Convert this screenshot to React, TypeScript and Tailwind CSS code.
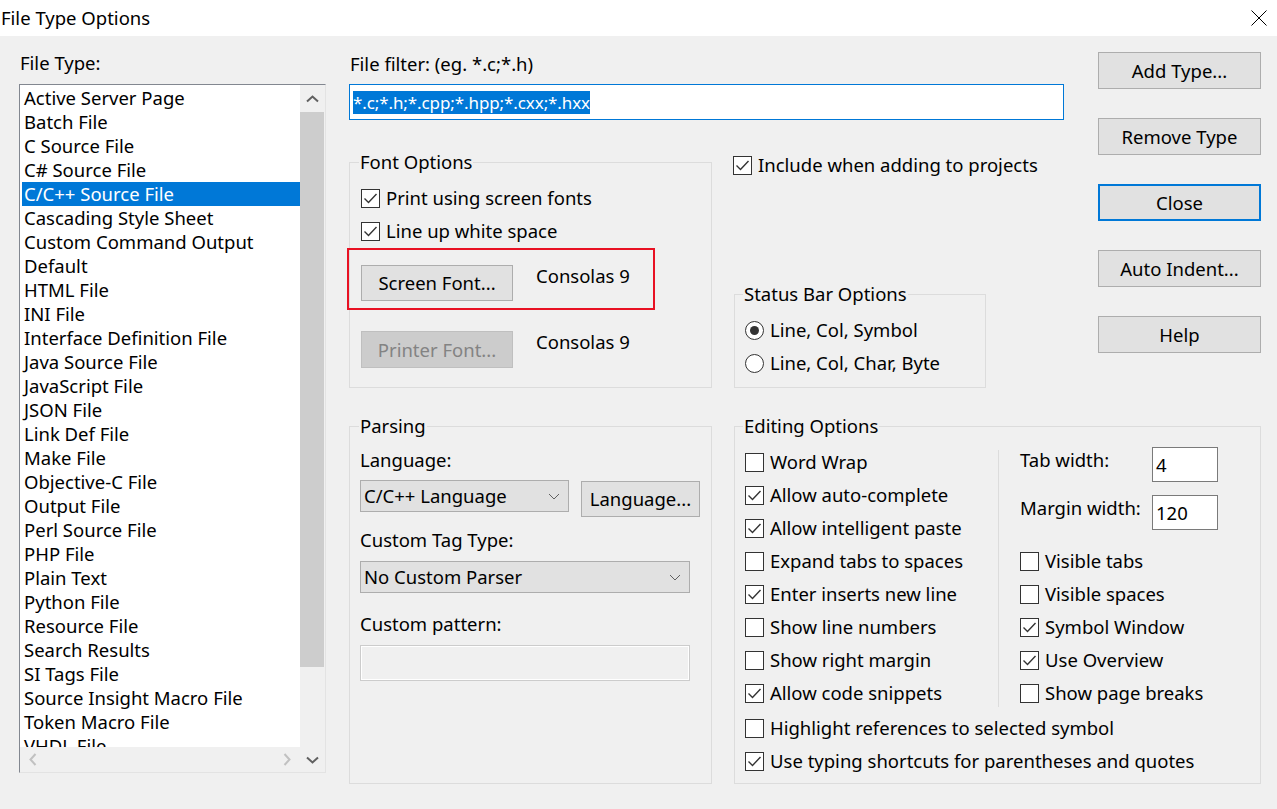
import React, { FC, ReactNode } from 'react'

const fileTypes = [
  'Active Server Page', 'Batch File', 'C Source File', 'C# Source File', 'C/C++ Source File',
  'Cascading Style Sheet', 'Custom Command Output', 'Default', 'HTML File', 'INI File',
  'Interface Definition File', 'Java Source File', 'JavaScript File', 'JSON File', 'Link Def File',
  'Make File', 'Objective-C File', 'Output File', 'Perl Source File', 'PHP File', 'Plain Text',
  'Python File', 'Resource File', 'Search Results', 'SI Tags File', 'Source Insight Macro File',
  'Token Macro File', 'VHDL File',
]

const CheckBox: FC<{ checked?: boolean; label: string }> = ({ checked, label }) => (
  <div className="flex items-center h-[24px] whitespace-nowrap">
    <span className="w-[19px] h-[19px] border border-[#333333] bg-white shrink-0 flex items-center justify-center">
      {checked && (
        <svg width="17" height="17" viewBox="0 0 17 17">
          <path d="M2.5 8.5 L6.5 12.5 L14.5 4" fill="none" stroke="#333333" strokeWidth="1.4" />
        </svg>
      )}
    </span>
    <span className="ml-[6px]">{label}</span>
  </div>
)

const Radio: FC<{ checked?: boolean; label: string }> = ({ checked, label }) => (
  <div className="flex items-center h-[24px] whitespace-nowrap">
    <span className="w-[19px] h-[19px] rounded-full border border-[#333333] bg-white shrink-0 flex items-center justify-center">
      {checked && <span className="w-[9px] h-[9px] rounded-full bg-[#333333]" />}
    </span>
    <span className="ml-[6px]">{label}</span>
  </div>
)

const Btn: FC<{ children: ReactNode; className?: string; disabled?: boolean; focused?: boolean }> = ({ children, className = '', disabled, focused }) => {
  let look = 'bg-[#e1e1e1] border border-[#adadad] text-black'
  if (disabled) look = 'bg-[#cccccc] border border-[#bfbfbf] text-[#838383]'
  if (focused) look = 'bg-[#e1e1e1] border-2 border-[#0078d7] text-black'
  return (
    <div className={`${look} flex items-center justify-center whitespace-nowrap shrink-0 leading-[24px] ${className}`}>{children}</div>
  )
}

const Chevron = () => (
  <svg width="12" height="7" viewBox="0 0 12 7">
    <path d="M1 1 L6 6 L11 1" fill="none" stroke="#606060" strokeWidth="1" />
  </svg>
)

const Combo: FC<{ value: string; className?: string }> = ({ value, className = '' }) => (
  <div className={`h-[32px] bg-[#e1e1e1] border border-[#adadad] flex items-center justify-between pl-[3px] pr-[8px] ${className}`}>
    <span className="whitespace-nowrap leading-[24px]">{value}</span>
    <Chevron />
  </div>
)

const Group: FC<{ title: string; className?: string; legendClass?: string; children: ReactNode }> = ({ title, className = '', legendClass = 'ml-[9px]', children }) => (
  <fieldset className={`border border-[#dcdcdc] m-0 p-0 ${className}`}>
    <legend className={`${legendClass} px-[1px] leading-[24px]`}>{title}</legend>
    {children}
  </fieldset>
)

const FileList = () => (
  <div className="mt-[9px] h-[689px] border-t border-l border-[#828790] border-r border-b border-r-[#e3e3e3] border-b-[#e3e3e3] bg-white flex">
    <div className="flex-1 flex flex-col min-w-0">
      <div className="flex-1 overflow-hidden pl-[2px] pt-[1px]">
        {fileTypes.map(t => (
          <div
            key={t}
            className={`h-[24px] leading-[24px] pl-[2px] whitespace-nowrap ${t === 'C/C++ Source File' ? 'bg-[#0078d7] text-white' : ''}`}
          >
            {t}
          </div>
        ))}
      </div>
      <div className="h-[25px] bg-[#f0f0f0] flex items-center justify-between px-[9px]">
        <svg width="8" height="13" viewBox="0 0 8 13">
          <path d="M6.5 1 L1.5 6.5 L6.5 12" fill="none" stroke="#c1c1c1" strokeWidth="2" />
        </svg>
        <svg width="8" height="13" viewBox="0 0 8 13">
          <path d="M1.5 1 L6.5 6.5 L1.5 12" fill="none" stroke="#c1c1c1" strokeWidth="2" />
        </svg>
      </div>
    </div>
    <div className="w-[25px] bg-[#f0f0f0] flex flex-col">
      <div className="h-[27px] flex items-center justify-center">
        <svg width="13" height="8" viewBox="0 0 13 8">
          <path d="M1 6.5 L6.5 1.5 L12 6.5" fill="none" stroke="#606060" strokeWidth="2" />
        </svg>
      </div>
      <div className="h-[555px] bg-[#cdcdcd] mr-[1px]" />
      <div className="flex-1" />
      <div className="h-[25px] flex items-center justify-center">
        <svg width="13" height="8" viewBox="0 0 13 8">
          <path d="M1 1.5 L6.5 6.5 L12 1.5" fill="none" stroke="#606060" strokeWidth="2" />
        </svg>
      </div>
    </div>
  </div>
)

export default function App() {
  return (
    <div className="w-[1277px] h-[809px] bg-[#f0f0f0] text-black text-[18.5px] overflow-hidden font-['Segoe_UI','Noto_Sans',sans-serif]">
      {/* title bar */}
      <div className="h-[36px] bg-white flex items-center justify-between">
        <span className="pl-[1px] leading-[24px]">File Type Options</span>
        <svg className="mr-[10px]" width="16" height="16" viewBox="0 0 16 16">
          <path d="M0.5 0.5 L15.5 15.5 M15.5 0.5 L0.5 15.5" stroke="#000" strokeWidth="1" />
        </svg>
      </div>

      <div className="flex pt-[15px] pl-[19px]">
        {/* file type list */}
        <div className="w-[307px] flex flex-col">
          <div className="leading-[24px] pl-[1px]">File Type:</div>
          <FileList />
        </div>

        <div className="ml-[23px] w-[912px] flex flex-col pt-[1px]">
          {/* upper area */}
          <div className="flex">
            <div className="w-[715px] flex flex-col">
              <div className="leading-[24px] pl-[1px]">File filter: (eg. *.c;*.h)</div>
              <div className="mt-[8px] h-[36px] border border-[#0078d7] bg-white pl-[3px] flex items-center">
                <span className="bg-[#0078d7] text-white text-[17px] tracking-[-0.1px] leading-[23px] whitespace-nowrap">*.c;*.h;*.cpp;*.hpp;*.cxx;*.hxx</span>
              </div>

              <div className="mt-[30px] flex gap-[22px]">
                <Group title="Font Options" className="w-[363px]">
                  <div className="pl-[11px] pt-[12px] pb-[19px] flex flex-col">
                    <CheckBox checked label="Print using screen fonts" />
                    <div className="mt-[9px]"><CheckBox checked label="Line up white space" /></div>
                    <div className="mt-[5px] -ml-[14px] w-[308px] h-[62px] border-2 border-[#e81123] flex items-start pl-[12px] pt-[15px]">
                      <Btn className="w-[152px] h-[36px]">Screen Font...</Btn>
                      <span className="ml-[23px] -mt-[1px] leading-[24px]">Consolas 9</span>
                    </div>
                    <div className="mt-[21px] flex items-start">
                      <Btn disabled className="w-[152px] h-[37px]">Printer Font...</Btn>
                      <span className="ml-[23px] -mt-[1px] leading-[24px]">Consolas 9</span>
                    </div>
                  </div>
                </Group>

                <div className="w-[252px] flex flex-col justify-between">
                  <div className="mt-[3px] -ml-[1px]">
                    <CheckBox checked label="Include when adding to projects" />
                  </div>
                  <Group title="Status Bar Options" legendClass="ml-[8px]" className="w-[252px]">
                    <div className="pl-[10px] pt-[12px] pb-[12px] flex flex-col gap-[9px]">
                      <Radio checked label="Line, Col, Symbol" />
                      <Radio label="Line, Col, Char, Byte" />
                    </div>
                  </Group>
                </div>
              </div>
            </div>

            {/* button column */}
            <div className="ml-[34px] w-[163px] flex flex-col gap-[29px]">
              <Btn className="h-[37px]">Add Type...</Btn>
              <Btn className="h-[37px]">Remove Type</Btn>
              <Btn focused className="h-[37px]">Close</Btn>
              <Btn className="h-[37px]">Auto Indent...</Btn>
              <Btn className="h-[37px]">Help</Btn>
            </div>
          </div>

          {/* lower area */}
          <div className="mt-[26px] flex gap-[22px]">
            <Group title="Parsing" className="w-[363px] h-[370px]">
              <div className="pl-[10px] pt-[10px] flex flex-col">
                <div className="leading-[24px]">Language:</div>
                <div className="mt-[8px] flex items-start">
                  <Combo value="C/C++ Language" className="w-[209px]" />
                  <Btn className="ml-[12px] mt-[1px] w-[119px] h-[36px]">Language...</Btn>
                </div>
                <div className="mt-[11px] leading-[24px]">Custom Tag Type:</div>
                <Combo value="No Custom Parser" className="mt-[9px] w-[330px]" />
                <div className="mt-[19px] leading-[24px]">Custom pattern:</div>
                <div className="mt-[9px] w-[330px] h-[36px] border border-[#cccccc] bg-[#f0f0f0] shadow-[inset_0_0_0_1px_#ffffff]" />
              </div>
            </Group>

            <Group title="Editing Options" legendClass="ml-[8px]" className="w-[527px] h-[370px]">
              <div className="pl-[10px] pt-[12px] flex flex-col">
                <div className="flex">
                  <div className="w-[253px] flex flex-col gap-[9px]">
                    <CheckBox label="Word Wrap" />
                    <CheckBox checked label="Allow auto-complete" />
                    <CheckBox checked label="Allow intelligent paste" />
                    <CheckBox label="Expand tabs to spaces" />
                    <CheckBox checked label="Enter inserts new line" />
                    <CheckBox label="Show line numbers" />
                    <CheckBox label="Show right margin" />
                    <CheckBox checked label="Allow code snippets" />
                  </div>
                  <div className="w-px h-[257px] bg-[#dcdcdc]" />
                  <div className="ml-[21px] -mt-[3px] flex flex-col">
                    <div className="flex items-start">
                      <span className="w-[132px] mt-[1px] leading-[24px]">Tab width:</span>
                      <div className="w-[66px] h-[35px] border border-[#7a7a7a] bg-white pl-[3px] flex items-center">4</div>
                    </div>
                    <div className="mt-[13px] flex items-start">
                      <span className="w-[132px] mt-[1px] leading-[24px]">Margin width:</span>
                      <div className="w-[66px] h-[35px] border border-[#7a7a7a] bg-white pl-[3px] flex items-center">120</div>
                    </div>
                    <div className="mt-[19px] flex flex-col gap-[9px]">
                      <CheckBox label="Visible tabs" />
                      <CheckBox label="Visible spaces" />
                      <CheckBox checked label="Symbol Window" />
                      <CheckBox checked label="Use Overview" />
                      <CheckBox label="Show page breaks" />
                    </div>
                  </div>
                </div>
                <div className="mt-[9px]"><CheckBox label="Highlight references to selected symbol" /></div>
                <div className="mt-[9px]"><CheckBox checked label="Use typing shortcuts for parentheses and quotes" /></div>
              </div>
            </Group>
          </div>
        </div>
      </div>
    </div>
  )
}
